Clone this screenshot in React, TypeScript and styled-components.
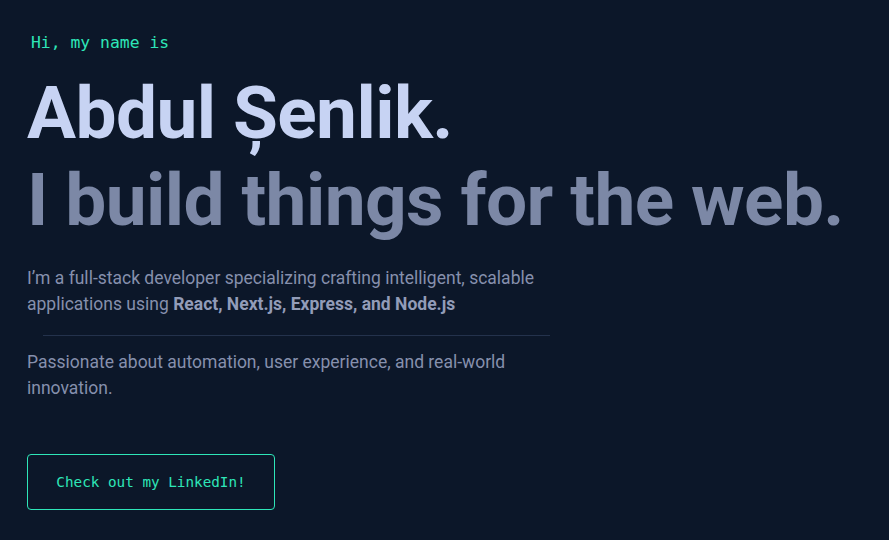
import React from "react";
import styled, { createGlobalStyle } from "styled-components";

const GlobalStyle = createGlobalStyle`
  html, body {
    margin: 0;
    padding: 0;
    background: #0c1729;
  }
  * {
    box-sizing: border-box;
  }
`;

const Hero = styled.section`
  min-height: 540px;
  padding: 30px 0 0 27px;
  display: flex;
  flex-direction: column;
  align-items: flex-start;
  font-family: Roboto, "Liberation Sans", sans-serif;
`;

const Greeting = styled.p`
  margin: 0 0 0 4px;
  font-family: "DejaVu Sans Mono", "Liberation Mono", monospace;
  font-size: 16.4px;
  line-height: 26px;
  color: #2ee6b8;
`;

const BigHeading = styled.h1<{ $muted?: boolean }>`
  margin: ${(p) => (p.$muted ? "0" : "14px 0 0")};
  font-size: 73px;
  font-weight: 700;
  line-height: 87px;
  letter-spacing: -0.6px;
  color: ${(p) => (p.$muted ? "#7c88a6" : "#c7d3f3")};
`;

const Text = styled.p`
  margin: 0;
  max-width: 540px;
  font-size: 17.5px;
  line-height: 26px;
  color: #8690ad;

  strong {
    font-weight: 700;
    color: #929cb8;
  }
`;

const Intro = styled(Text)`
  margin-top: 21px;
`;

const Divider = styled.hr`
  width: 507px;
  margin: 18px 0 13px 16px;
  border: 0;
  border-top: 1px solid #24324c;
`;

const Button = styled.a`
  margin-top: 53px;
  width: 248px;
  height: 56px;
  display: flex;
  align-items: center;
  justify-content: center;
  border: 1px solid #2ee6b8;
  border-radius: 4px;
  font-family: "DejaVu Sans Mono", "Liberation Mono", monospace;
  font-size: 14.3px;
  color: #2ee6b8;
  text-decoration: none;
`;

export default function App() {
  return (
    <>
      <GlobalStyle />
      <Hero>
        <Greeting>Hi, my name is</Greeting>
        <BigHeading>Abdul Șenlik.</BigHeading>
        <BigHeading $muted>I build things for the web.</BigHeading>
        <Intro>
          I’m a full-stack developer specializing crafting intelligent, scalable applications
          using <strong>React, Next.js, Express, and Node.js</strong>
        </Intro>
        <Divider />
        <Text>Passionate about automation, user experience, and real-world innovation.</Text>
        <Button href="#">Check out my LinkedIn!</Button>
      </Hero>
    </>
  );
}
